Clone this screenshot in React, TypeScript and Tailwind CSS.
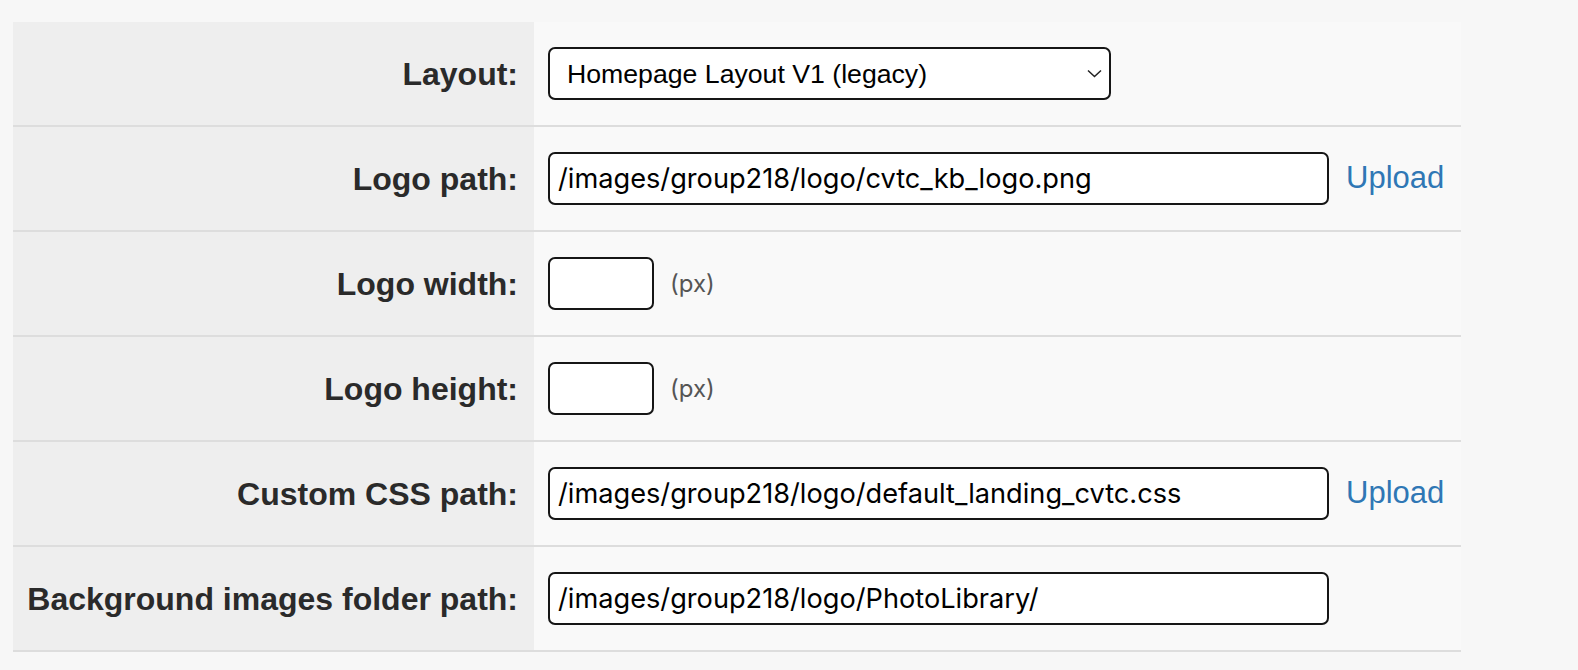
import React from "react";

const labelCls =
  "flex w-[521px] shrink-0 items-center justify-end bg-[#eeeeee] pr-4 text-[32px] font-bold text-[#2a2a2a]";
const valueCls = "flex flex-1 items-center bg-[#f9f9f9] pl-[14px]";
const inputCls =
  "h-[53px] rounded-[7px] border-2 border-[#161616] bg-white px-2 text-[27.2px] text-black outline-none";

type Row = {
  label: string;
  kind: "select" | "path" | "size";
  value?: string;
  upload?: boolean;
};

const rows: Row[] = [
  { label: "Layout:", kind: "select", value: "Homepage Layout V1 (legacy)" },
  { label: "Logo path:", kind: "path", value: "/images/group218/logo/cvtc_kb_logo.png", upload: true },
  { label: "Logo width:", kind: "size" },
  { label: "Logo height:", kind: "size" },
  { label: "Custom CSS path:", kind: "path", value: "/images/group218/logo/default_landing_cvtc.css", upload: true },
  { label: "Background images folder path:", kind: "path", value: "/images/group218/logo/PhotoLibrary/" },
];

function Field({ row }: { row: Row }) {
  if (row.kind === "select") {
    return (
      <div className="relative w-[563px]">
        <select
          defaultValue={row.value}
          className="h-[53px] w-full appearance-none rounded-[7px] border-2 border-[#161616] bg-white pl-[17px] text-[26.67px] text-black outline-none"
          style={{ fontFamily: '"Liberation Sans", Arial, sans-serif' }}
        >
          <option>Homepage Layout V1 (legacy)</option>
          <option>Homepage Layout V2</option>
        </select>
        <svg
          className="pointer-events-none absolute right-[9px] top-[22px]"
          width="15"
          height="9"
          viewBox="0 0 15 9"
          fill="none"
        >
          <path d="M1 1.5l6.5 6 6.5-6" stroke="#222" strokeWidth="1.5" />
        </svg>
      </div>
    );
  }
  if (row.kind === "size") {
    return (
      <div className="flex items-center gap-[16px]">
        <input type="text" className={`${inputCls} w-[106px]`} />
        <span
          className="text-[24px] text-[#555]"
          style={{ fontFamily: "Inter, sans-serif" }}
        >
          (px)
        </span>
      </div>
    );
  }
  return (
    <div className="flex items-center gap-[17px]">
      <input
        type="text"
        defaultValue={row.value}
        className={`${inputCls} w-[781px]`}
        style={{ fontFamily: "Inter, sans-serif" }}
      />
      {row.upload && (
        <a href="#" className="text-[31px] text-[#2f77b5]">
          Upload
        </a>
      )}
    </div>
  );
}

export default function App() {
  return (
    <div
      className="min-h-[670px] bg-[#f7f7f7] pl-[13px] pt-[22px]"
      style={{ fontFamily: '"Liberation Sans", Arial, sans-serif' }}
    >
      <div className="flex w-[1448px] flex-col">
        {rows.map((row) => (
          <div key={row.label} className="flex h-[105px] border-b-2 border-[#dddddd]">
            <div className={labelCls}>{row.label}</div>
            <div className={valueCls}>
              <Field row={row} />
            </div>
          </div>
        ))}
      </div>
    </div>
  );
}
